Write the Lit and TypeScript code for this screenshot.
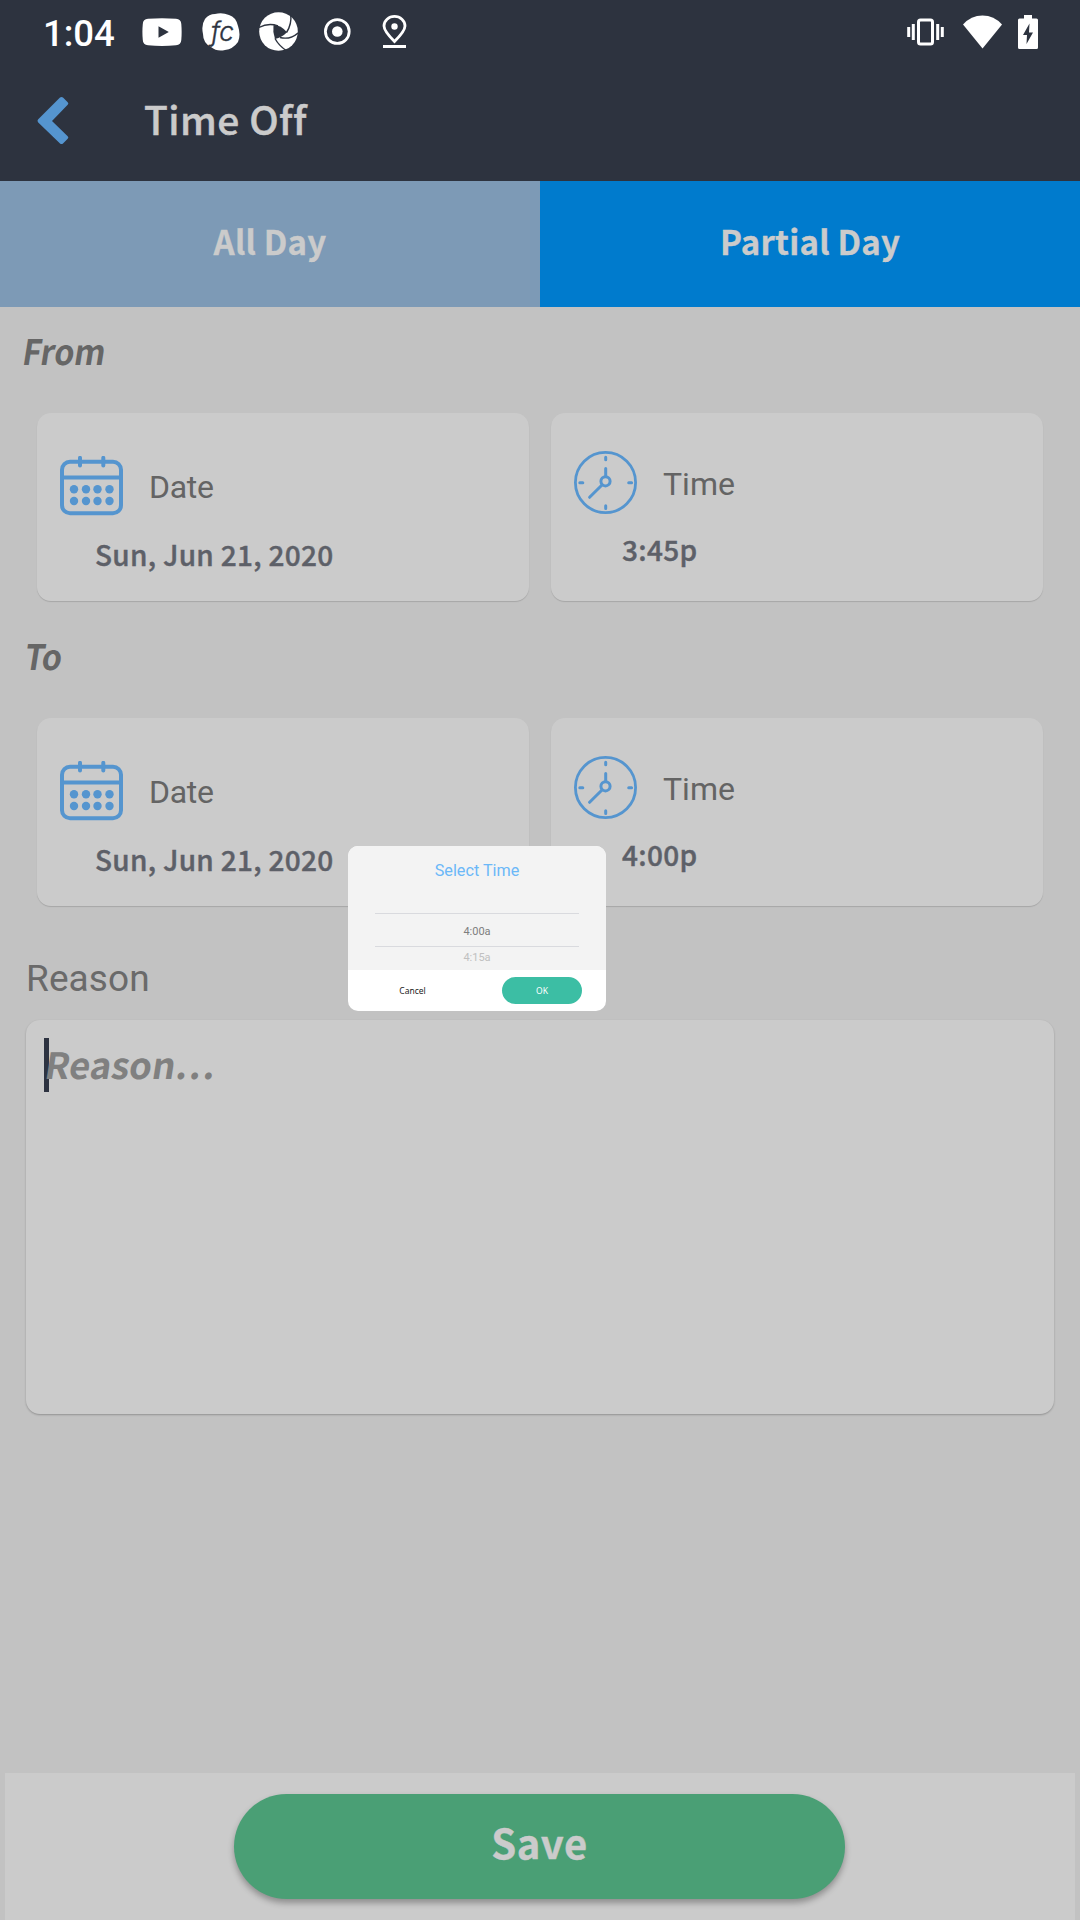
import { LitElement, html, css, svg } from "lit";
import { customElement, property } from "lit/decorators.js";

const calendarIcon = html`<svg class="cal" width="63" height="60" viewBox="0 0 63 60">
  <g fill="none" stroke="#5595cf" stroke-linecap="round">
    <rect x="2" y="5.700" width="59" height="51.600" rx="8" stroke-width="4"></rect>
    <path d="M2 21.500H61" stroke-width="3.800" stroke-linecap="butt"></path>
    <path d="M20 1.800V9.500M43.300 1.800V9.500" stroke-width="4"></path>
  </g>
  <g fill="#5595cf">
    ${[14, 26, 37.5, 49.5].map((x) => [33.2, 45].map((y) => svg`<circle cx=${x} cy=${y} r="4.2"></circle>`))}
  </g>
</svg>`;

const clockIcon = html`<svg class="clock" width="63" height="63" viewBox="0 0 63 63" fill="none" stroke="#5595cf" stroke-linecap="round">
  <circle cx="31.500" cy="31.500" r="30.100" stroke-width="2.800"></circle>
  <circle cx="31.500" cy="30.300" r="4.600" stroke-width="3"></circle>
  <path d="M31.700 6.200V8.800M31.700 54.800V57.400M5.800 31.700H8.800M54.700 31.700H57.600M31.700 17.500V25M28 34L15.600 46.300" stroke-width="3"></path>
</svg>`;

@customElement("picker-card")
export class PickerCard extends LitElement {
  @property() kind = "date";
  @property() value = "";

  static styles = css`
    :host {
      display: block;
      flex: 1;
      height: 188px;
      box-sizing: border-box;
      border-radius: 14px;
      background: #cbcbcb;
      box-shadow: 0 1px 1px rgba(0, 0, 0, 0.14);
    }
    .head {
      display: flex;
      padding-left: 23px;
      color: #646464;
      font: 32px/40px Roboto, sans-serif;
    }
    .date .head { padding-top: 43px; gap: 26px; }
    .time .head { padding-top: 38px; gap: 26px; }
    .date .label { padding-top: 11px; letter-spacing: -0.3px; }
    .time .label { padding-top: 13px; }
    svg { display: block; }
    .value {
      color: #5d6068;
      font: 500 28px/40px "Noto Sans CJK JP", sans-serif;
      letter-spacing: 0.3px;
      -webkit-text-stroke: 0.4px #5d6068;
      white-space: nowrap;
    }
    .date .value { padding: 18px 0 0 58px; }
    .time .value { padding: 15px 0 0 71px; }
  `;

  render() {
    const isDate = this.kind === "date";
    return html`<div class=${this.kind}>
      <div class="head">
        ${isDate ? calendarIcon : clockIcon}
        <div class="label">${isDate ? "Date" : "Time"}</div>
      </div>
      <div class="value">${this.value}</div>
    </div>`;
  }
}

@customElement("time-dialog")
export class TimeDialog extends LitElement {
  static styles = css`
    :host {
      display: flex;
      flex-direction: column;
      width: 258px;
      height: 165px;
      border-radius: 10px;
      overflow: hidden;
      background: #fff;
      font-family: Roboto, sans-serif;
      text-align: center;
    }
    .top { height: 124px; background: #f3f3f3; }
    .title { padding-top: 15px; font-size: 16.200px; line-height: 20px; color: #6bb8f8; }
    .wheel { margin: 32px 27px 0; font-size: 11px; color: #7e7e7e; }
    .picked {
      height: 32px;
      line-height: 35px;
      border-top: 1px solid #d9dade;
      border-bottom: 1px solid #d9dade;
    }
    .next { height: 20px; line-height: 22px; color: #c0c0c0; }
    .actions {
      display: flex;
      align-items: center;
      height: 41px;
      font: 8.500px/27px "Noto Sans", sans-serif;
    }
    .cancel { width: 129px; color: #222; }
    .ok { width: 80px; height: 27px; margin-left: 25px; border-radius: 14px; background: #3cbea4; color: #fff; }
  `;

  render() {
    return html`
      <div class="top">
        <div class="title">Select Time</div>
        <div class="wheel">
          <div class="picked">4:00a</div>
          <div class="next">4:15a</div>
        </div>
      </div>
      <div class="actions">
        <div class="cancel">Cancel</div>
        <div class="ok">OK</div>
      </div>
    `;
  }
}

@customElement("app-root")
export class AppRoot extends LitElement {
  static styles = css`
    :host {
      display: flex;
      flex-direction: column;
      position: relative;
      width: 1080px;
      height: 1920px;
      overflow: hidden;
      background: #c2c2c2;
      font-family: "Noto Sans CJK JP", sans-serif;
    }
    svg { display: block; flex: none; }
    .status {
      display: flex;
      align-items: flex-start;
      height: 63px;
      background: #2d333f;
      color: #fff;
      font: 500 36.500px/40px Roboto, sans-serif;
    }
    .clock { width: 99px; padding: 14px 0 0 43px; }
    .left, .right { display: flex; align-items: center; height: 63px; }
    .left { gap: 19.500px; }
    .right { margin-left: auto; padding-right: 42px; gap: 16px; }
    .fc { font: italic 300 26px Inter, sans-serif; }
    .bar {
      display: flex;
      height: 118px;
      background: #2d333f;
      color: #cbcbcb;
    }
    .back { margin: 33px 0 0 37px; }
    .heading {
      margin: 35px 0 0 75px;
      font-size: 39px;
      line-height: 40px;
      font-weight: 500;
      letter-spacing: 0.5px;
      -webkit-text-stroke: 0.5px #cbcbcb;
    }
    .tabs { display: flex; height: 126px; color: #cbcbcb; font-weight: 700; font-size: 33px; letter-spacing: 0.200px; }
    .tab { flex: 1; line-height: 121px; text-align: center; background: #7d9ab6; -webkit-text-stroke: 0.300px #cbcbcb; }
    .tab.active { background: #007bcd; }
    .slanted {
      display: inline-block;
      transform: skewX(-9deg) scaleX(0.92);
      transform-origin: 0 70%;
    }
    .section {
      height: 106px;
      padding-left: 22px;
      box-sizing: border-box;
      padding-top: 23px;
      color: #666;
      font-size: 35px;
      line-height: 40px;
      font-weight: 700;
    }
    .section.to { height: 117px; padding-top: 34px; padding-left: 24px; }
    .cards { display: flex; gap: 22px; padding: 0 37px; }
    .reason-label {
      padding: 53px 0 0 26px;
      height: 61px;
      color: #6a6a6a;
      font: 37px/40px Roboto, sans-serif;
      letter-spacing: 0.100px;
    }
    .reason {
      display: flex;
      align-items: flex-start;
      box-sizing: border-box;
      height: 394px;
      margin: 0 26px;
      padding: 18px;
      border-radius: 14px;
      background: #cbcbcb;
      box-shadow: 0 1px 2px rgba(0, 0, 0, 0.25);
      color: #808080;
      font-size: 36px;
      line-height: 51px;
      font-weight: 700;
    }
    .reason .slanted { transform: skewX(-9deg) scaleX(1.01); }
    .caret { width: 5px; height: 54px; margin-right: -5px; background: #2d3341; }
    .footer {
      margin: auto 5px 0;
      height: 147px;
      box-sizing: border-box;
      padding: 21px 0 0 229px;
      background: #cbcbcb;
    }
    .save {
      width: 611px;
      height: 105px;
      border-radius: 53px;
      background: #4a9f75;
      box-shadow: 0 4px 6px rgba(0, 0, 0, 0.3);
      color: #cbcbcb;
      font-size: 40px;
      line-height: 97px;
      font-weight: 700;
      letter-spacing: 0.500px;
      -webkit-text-stroke: 0.400px #cbcbcb;
      text-align: center;
    }
    .dialog { position: absolute; left: 348px; top: 846px; }
  `;

  render() {
    return html`
      <div class="status">
        <div class="clock">1:04</div>
        <div class="left">
          <svg width="40" height="28" viewBox="0 0 40 28">
            <path fill="#fff" fill-rule="evenodd" d="M6 .8Q20-.5 34 .8Q39 1 39.300 6Q40 14 39.300 22Q39 27 34 27.300Q20 28.500 6 27.300Q1 27 .8 22Q0 14 .8 6Q1 1 6 .8ZM16.500 8.300V19.700L26.800 14Z"></path>
          </svg>
          <svg width="38" height="38" viewBox="0 0 38 38">
            <path fill="#fff" d="M13 1Q20-1 27 2Q34 4 36 13Q39 22 36 29Q31 36 23 37Q15 39 9 34Q1 30 1 21Q-1 12 3 6Q7 1 13 1Z"></path>
            <text class="fc" x="9" y="28" fill="#2d333f" stroke="#2d333f" stroke-width=".4">fc</text>
          </svg>
          <svg width="39" height="39" viewBox="0 0 39 39">
            <circle cx="19.500" cy="19.500" r="19.300" fill="#fff"></circle>
            <path fill="#2d333f" d="M14.500 13Q22 13 28 20.300Q23 25.500 16 27Q13.500 20 14.500 13Z"></path>
            <g fill="none" stroke="#2d333f" stroke-width="1.400">
              <path d="M0 15.500Q9 10.500 19 13.800"></path>
              <path d="M31.700 2Q33 12 27.500 20.500"></path>
              <path d="M39 21Q31 28 21 25.500"></path>
              <path d="M16 26.500Q20 34 28 39"></path>
            </g>
          </svg>
          <svg width="38" height="27" viewBox="0 0 38 27">
            <circle cx="19.300" cy="13.500" r="11.900" fill="none" stroke="#fff" stroke-width="2.800"></circle>
            <circle cx="19.300" cy="13.500" r="5.300" fill="#fff"></circle>
          </svg>
          <svg width="38" height="34" viewBox="0 0 38 34">
            <path fill="none" stroke="#fff" stroke-width="2.800" d="M19.500 26.500Q9 16 9 11A10.500 9.600 0 0 1 30 11Q30 16 19.500 26.500Z"></path>
            <circle cx="19.500" cy="11.500" r="3.200" fill="#fff"></circle>
            <path stroke="#fff" stroke-width="3" d="M8 31.500H31"></path>
          </svg>
        </div>
        <div class="right">
          <svg width="40" height="28" viewBox="0 0 40 28" fill="none" stroke="#fff">
            <rect x="11.500" y="2" width="14" height="24" rx="2" stroke-width="3"></rect>
            <path d="M1.700 9V19M35.300 9V19M6.300 6V22M30.700 6V22" stroke-width="3"></path>
          </svg>
          <svg width="39" height="34" viewBox="0 0 39 34">
            <path fill="#fff" d="M0 9.500Q8 .5 19.500 .5T39 9.500L19.500 33.500Z"></path>
          </svg>
          <svg width="20" height="34" viewBox="0 0 20 34">
            <path fill="#fff" fill-rule="evenodd" d="M6 0H14V3.500H18.500Q20 3.500 20 5V32.500Q20 34 18.500 34H1.500Q0 34 0 32.500V5Q0 3.500 1.500 3.500H6ZM11.500 8.500L5 20H9L8.500 29L15 17.500H11Z"></path>
          </svg>
        </div>
      </div>
      <div class="bar">
        <svg class="back" width="32" height="50" viewBox="0 0 32 50">
          <path fill="#5595cf" d="M23 1.500Q24.500 .3 26 1.500L30.700 6.200Q32 7.500 30.700 8.800L15 25L30.700 40.200Q32 41.500 30.700 42.800L26 47.500Q24.500 48.700 23 47.500L1 26.200Q0 25 1 23.600Z"></path>
        </svg>
        <div class="heading">Time Off</div>
      </div>
      <div class="tabs">
        <div class="tab">All Day</div>
        <div class="tab active">Partial Day</div>
      </div>
      <div class="section"><span class="slanted">From</span></div>
      <div class="cards">
        <picker-card kind="date" value="Sun, Jun 21, 2020"></picker-card>
        <picker-card kind="time" value="3:45p"></picker-card>
      </div>
      <div class="section to"><span class="slanted">To</span></div>
      <div class="cards">
        <picker-card kind="date" value="Sun, Jun 21, 2020"></picker-card>
        <picker-card kind="time" value="4:00p"></picker-card>
      </div>
      <div class="reason-label">Reason</div>
      <div class="reason"><div class="caret"></div><span class="slanted">Reason…</span></div>
      <div class="footer"><div class="save">Save</div></div>
      <time-dialog class="dialog"></time-dialog>
    `;
  }
}
